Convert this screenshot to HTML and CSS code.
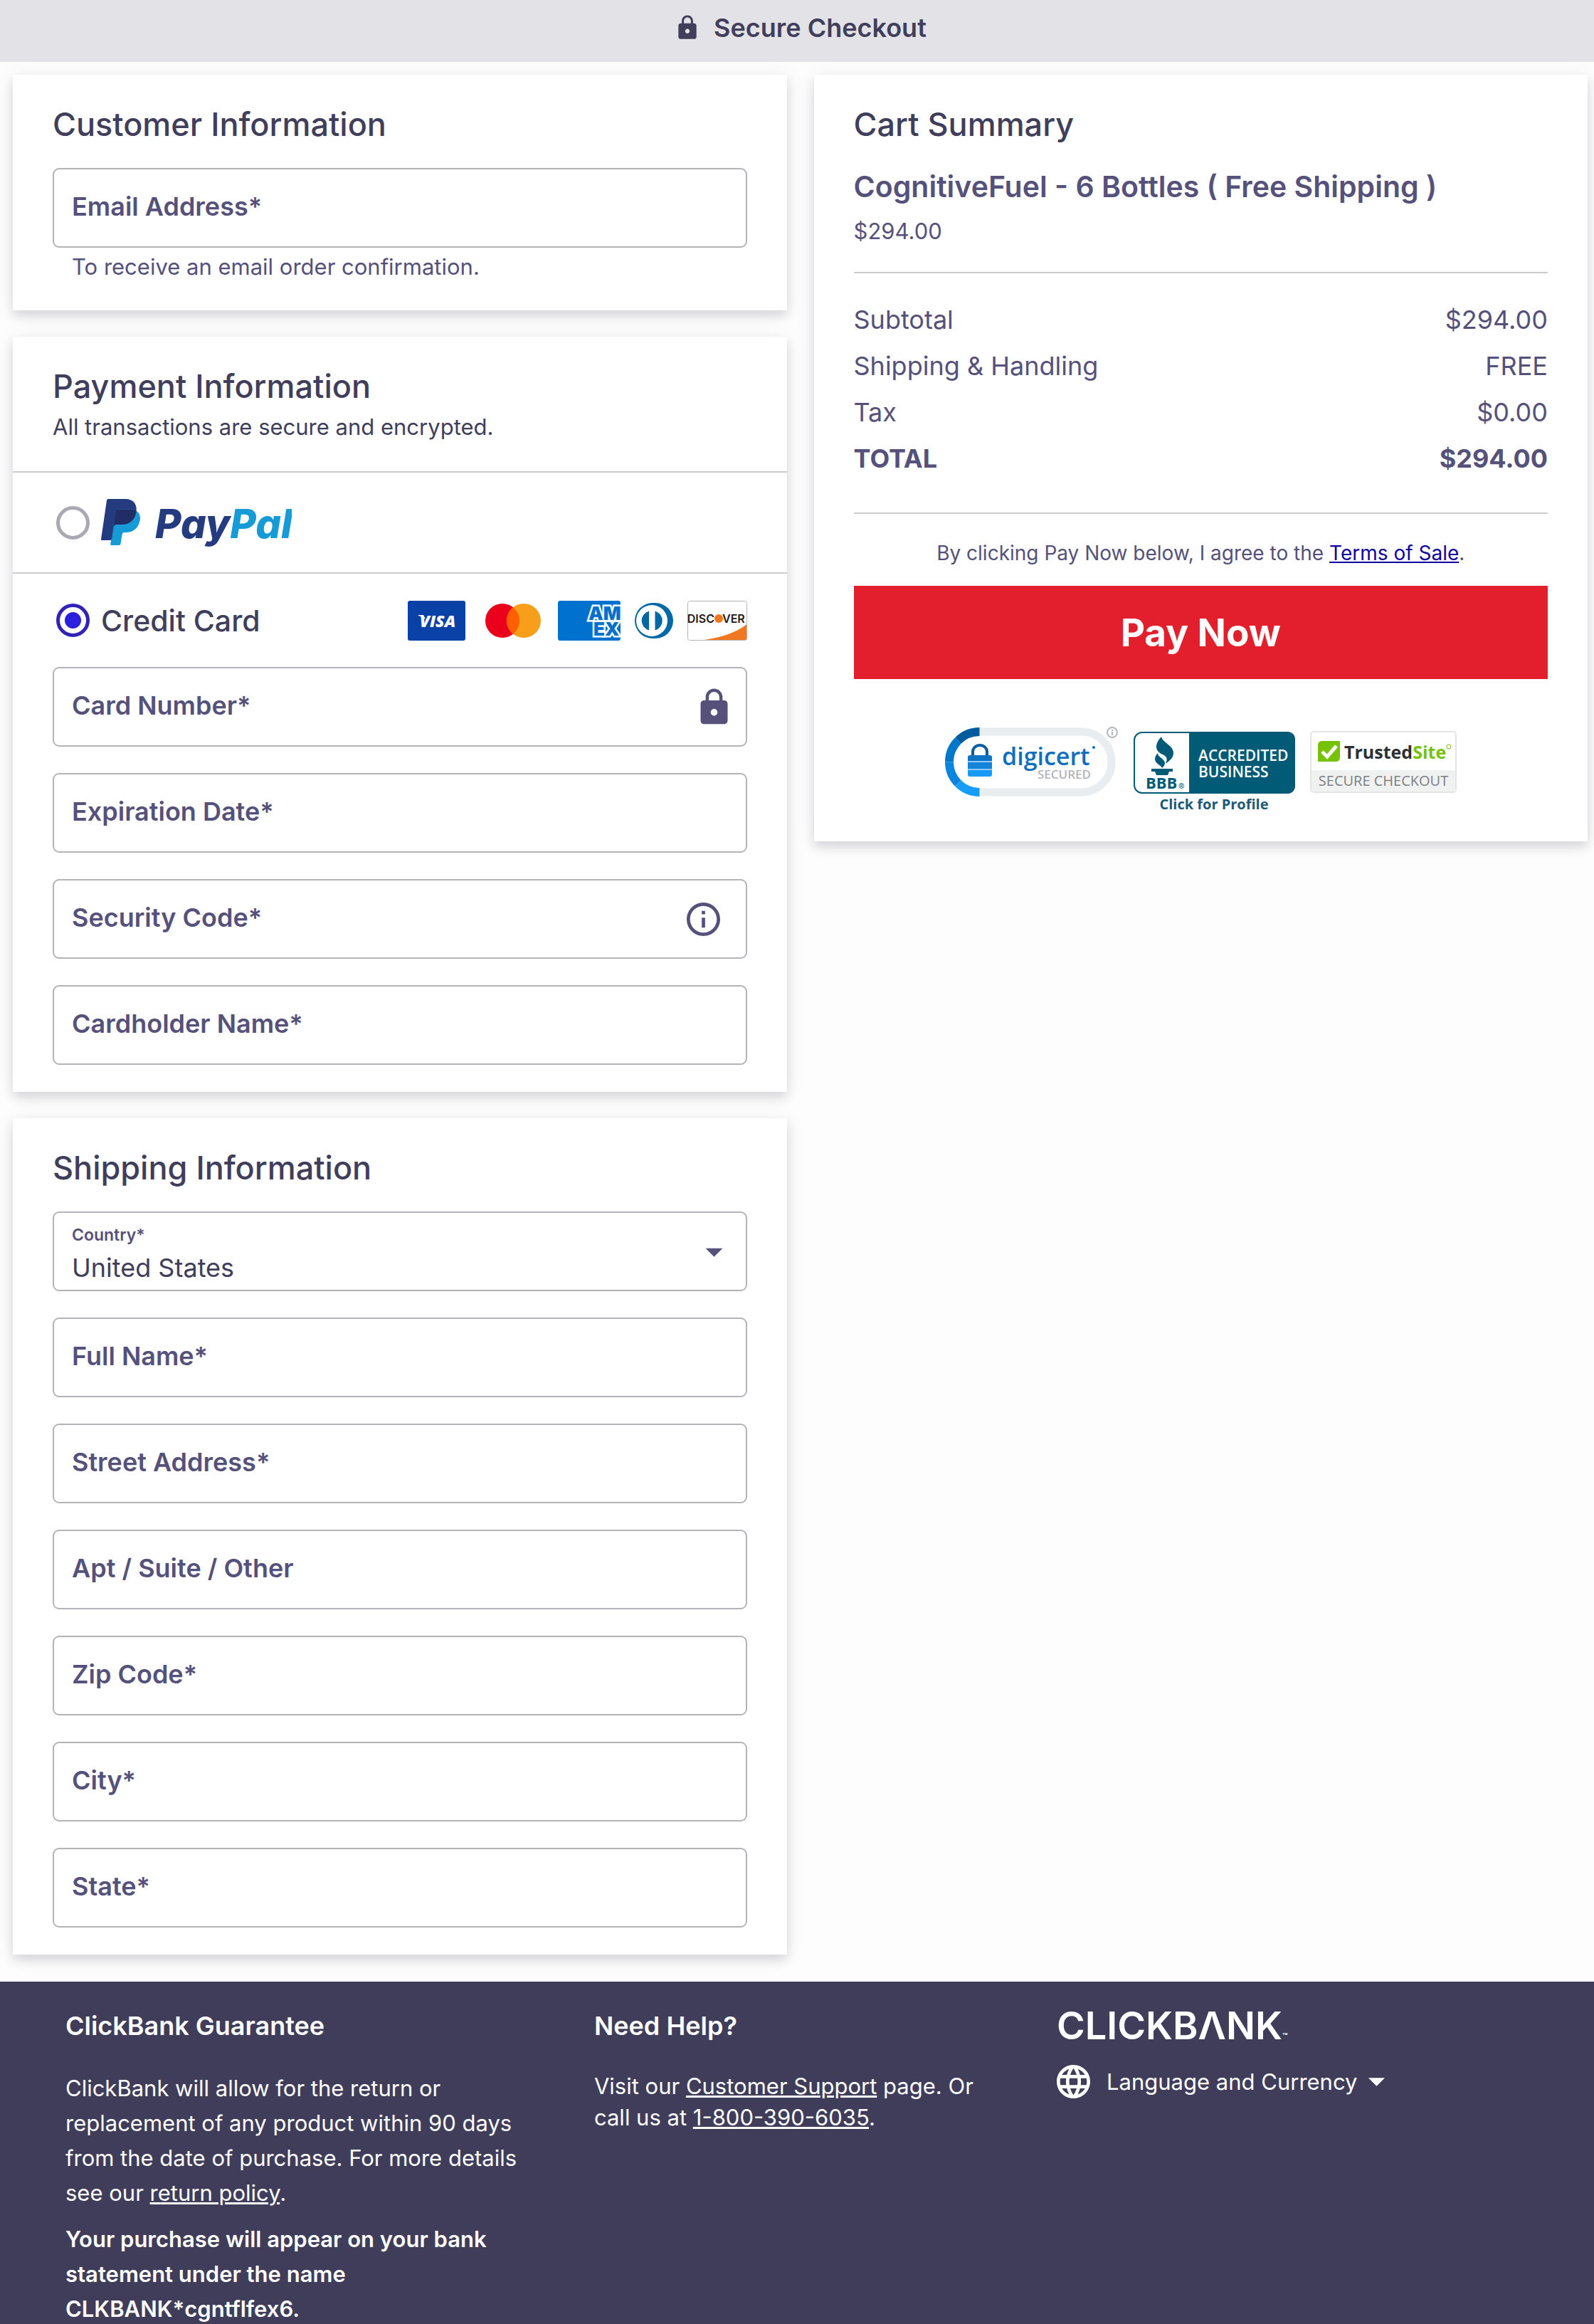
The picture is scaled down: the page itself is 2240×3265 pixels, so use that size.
FILE: index.html
```html
<!DOCTYPE html>
<html lang="en">
<head>
    <meta charset="UTF-8">
    <meta name="viewport" content="width=device-width, initial-scale=1.0">
    <title>Secure Checkout</title>
    <link rel="stylesheet" href="styles.css">
</head>
<body>
    <header class="topbar">
        <svg class="topbar-lock" viewBox="0 0 24 24" aria-hidden="true"><path d="M18 8h-1V6c0-2.760-2.240-5-5-5S7 3.240 7 6v2H6c-1.100 0-2 .9-2 2v10c0 1.100.9 2 2 2h12c1.100 0 2-.9 2-2V10c0-1.100-.9-2-2-2zm-6 9c-1.100 0-2-.9-2-2s.9-2 2-2 2 .9 2 2-.9 2-2 2zM8.900 8V6c0-1.710 1.390-3.100 3.100-3.100s3.100 1.390 3.100 3.100v2z"/></svg>
        <span>Secure Checkout</span>
    </header>

    <main class="checkout">
        <form class="column" id="order">
            <section class="card">
                <h2>Customer Information</h2>
                <div class="field">
                    <label for="email">Email Address*</label>
                    <input type="email" id="email">
                </div>
                <p class="hint">To receive an email order confirmation.</p>
            </section>

            <section class="card">
                <h2 class="tight">Payment Information</h2>
                <p class="sub">All transactions are secure and encrypted.</p>

                <div class="method">
                    <input type="radio" name="method" id="paypal">
                    <label for="paypal">
                        <svg width="268" height="76" viewBox="0 -5 268 76" role="img" aria-label="PayPal">
                            <clipPath id="pp"><path d="M10 0H34C46 0 51 8 49.500 18C47.500 30 40 36 29 36H23C19.500 36 18 37 17.500 40L15 56Q14.600 58 13 58H1Q0 58 0 56.500L8 2Q8.400 0 10 0Z"/></clipPath>
                            <path fill="#253b80" d="M10 0H34C46 0 51 8 49.500 18C47.500 30 40 36 29 36H23C19.500 36 18 37 17.500 40L15 56Q14.600 58 13 58H1Q0 58 0 56.500L8 2Q8.400 0 10 0Z"/>
                            <path fill="#179bd7" d="M22 14.500H40C52 14.500 56 22 54.800 29C53 41 45 47 35 47H33Q30 47 29.600 50L27.500 63Q27 65 25.500 65H14Q13 65 13.300 63L20.500 16Q21 14.500 22 14.500Z"/>
                            <path clip-path="url(#pp)" fill="#222d65" d="M22 14.500H40C52 14.500 56 22 54.800 29C53 41 45 47 35 47H33Q30 47 29.600 50L27.500 63Q27 65 25.500 65H14Q13 65 13.300 63L20.500 16Q21 14.500 22 14.500Z"/>
                            <text class="paypal-word" x="76" y="55" fill="#253b80">Pay<tspan fill="#179bd7">Pal</tspan></text>
                        </svg>
                    </label>
                </div>

                <div class="method method-card">
                    <input type="radio" name="method" id="credit" checked>
                    <label for="credit">Credit Card</label>
                    <div class="brands">
                        <svg width="81" height="56" viewBox="0 0 81 56" role="img" aria-label="Visa">
                            <rect width="81" height="56" rx="3" fill="#0a41a6"/>
                            <path fill="#fff" d="M14 20h8l3 6z"/>
                            <text class="visa" x="42" y="37" text-anchor="middle" fill="#fff">VISA</text>
                        </svg>
                        <svg width="90" height="56" viewBox="0 0 90 56" role="img" aria-label="Mastercard">
                            <clipPath id="mc"><circle cx="32" cy="28" r="24"/></clipPath>
                            <circle cx="32" cy="28" r="24" fill="#eb001b"/>
                            <circle cx="62" cy="28" r="24" fill="#f79e1b"/>
                            <circle cx="62" cy="28" r="24" fill="#ff5f00" clip-path="url(#mc)"/>
                        </svg>
                        <svg width="88" height="56" viewBox="0 0 88 56" role="img" aria-label="American Express">
                            <clipPath id="ax"><rect width="88" height="56" rx="3"/></clipPath>
                            <g clip-path="url(#ax)">
                                <rect width="88" height="56" fill="#0071ce"/>
                                <text class="amex" x="43" y="27">AM</text>
                                <text class="amex" x="50" y="49">EX</text>
                            </g>
                        </svg>
                        <svg width="54" height="56" viewBox="0 0 54 56" role="img" aria-label="Diners Club">
                            <rect y="3" width="54" height="50" rx="25" fill="#0069a5"/>
                            <circle cx="24" cy="28" r="22" fill="#fff"/>
                            <path fill="#0069a5" d="M20 14.500a14 14 0 0 0 0 27zM28.500 14.500a14 14 0 0 1 0 27z"/>
                        </svg>
                        <svg width="84" height="56" viewBox="0 0 84 56" role="img" aria-label="Discover">
                            <path fill="#f27721" d="M21 55.500Q62 50 83.500 33V53q0 2.500-2.500 2.500z"/>
                            <rect x=".5" y=".5" width="83" height="55" rx="3" fill="none" stroke="#b5b5b8"/>
                            <text class="discover" x="38" y="31" text-anchor="end">DISC</text>
                            <circle cx="44" cy="25" r="6" fill="#f27721"/>
                            <text class="discover" x="49" y="31">VER</text>
                        </svg>
                    </div>
                </div>

                <div class="fields">
                    <div class="field">
                        <label for="number">Card Number*</label>
                        <input type="text" id="number">
                        <svg class="field-icon" viewBox="0 0 24 24" aria-hidden="true"><path d="M18 8h-1V6c0-2.760-2.240-5-5-5S7 3.240 7 6v2H6c-1.100 0-2 .9-2 2v10c0 1.100.9 2 2 2h12c1.100 0 2-.9 2-2V10c0-1.100-.9-2-2-2zm-6 9c-1.100 0-2-.9-2-2s.9-2 2-2 2 .9 2 2-.9 2-2 2zM8.900 8V6c0-1.710 1.390-3.100 3.100-3.100s3.100 1.390 3.100 3.100v2z"/></svg>
                    </div>
                    <div class="field">
                        <label for="expiry">Expiration Date*</label>
                        <input type="text" id="expiry">
                    </div>
                    <div class="field">
                        <label for="cvv">Security Code*</label>
                        <input type="text" id="cvv">
                        <button type="button" class="info" aria-label="About the security code">
                            <svg viewBox="2 2 20 20" aria-hidden="true"><path d="M11 7h2v2h-2zm0 4h2v6h-2zm1-9C6.480 2 2 6.480 2 12s4.480 10 10 10 10-4.480 10-10S17.520 2 12 2zm0 18c-4.410 0-8-3.590-8-8s3.590-8 8-8 8 3.590 8 8-3.590 8-8 8z"/></svg>
                        </button>
                    </div>
                    <div class="field">
                        <label for="holder">Cardholder Name*</label>
                        <input type="text" id="holder">
                    </div>
                </div>
            </section>

            <section class="card">
                <h2>Shipping Information</h2>
                <div class="fields">
                    <div class="field field-select">
                        <label for="country">Country*</label>
                        <select id="country"><option>United States</option></select>
                        <svg class="field-icon" viewBox="0 0 24 24" aria-hidden="true"><path d="M7 10l5 5 5-5z"/></svg>
                    </div>
                    <div class="field">
                        <label for="name">Full Name*</label>
                        <input type="text" id="name">
                    </div>
                    <div class="field">
                        <label for="street">Street Address*</label>
                        <input type="text" id="street">
                    </div>
                    <div class="field">
                        <label for="apt">Apt / Suite / Other</label>
                        <input type="text" id="apt">
                    </div>
                    <div class="field">
                        <label for="zip">Zip Code*</label>
                        <input type="text" id="zip">
                    </div>
                    <div class="field">
                        <label for="city">City*</label>
                        <input type="text" id="city">
                    </div>
                    <div class="field">
                        <label for="state">State*</label>
                        <input type="text" id="state">
                    </div>
                </div>
            </section>
        </form>

        <div class="column">
            <section class="card">
                <h2>Cart Summary</h2>
                <h3>CognitiveFuel - 6 Bottles ( Free Shipping )</h3>
                <p class="price">$294.00</p>
                <div class="totals">
                    <table>
                        <tr><th>Subtotal</th><td>$294.00</td></tr>
                        <tr><th>Shipping &amp; Handling</th><td>FREE</td></tr>
                        <tr><th>Tax</th><td>$0.00</td></tr>
                        <tr class="total"><th>TOTAL</th><td>$294.00</td></tr>
                    </table>
                </div>
                <p class="terms">By clicking Pay Now below, I agree to the <a href="#">Terms of Sale</a>.</p>
                <button type="submit" form="order" class="pay">Pay Now</button>

                <div class="badges">
                    <svg width="244" height="124" viewBox="0 0 244 124" role="img" aria-label="DigiCert Secured">
                        <rect x="6" y="8" width="228" height="85" rx="42" fill="#fff" stroke="#e8edef" stroke-width="11"/>
                        <g fill="none" stroke-width="12">
                            <path stroke="#005b9f" d="M48.500 8A42.500 42.500 0 0 0 18.400 20.500"/>
                            <path stroke="#0078c9" d="M18.400 20.500A42.500 42.500 0 0 0 6 50.500"/>
                            <path stroke="#0b86e0" d="M6 50.500A42.500 42.500 0 0 0 18.400 80.500"/>
                            <path stroke="#169dfa" d="M18.400 80.500A42.500 42.500 0 0 0 48.500 93"/>
                        </g>
                        <path d="M39 43V36a10 9 0 0 1 20 0v7" fill="none" stroke="#0a5c9f" stroke-width="4"/>
                        <path fill="#0f73c4" d="M35 41h28q3 0 3 3v5H32v-5q0-3 3-3z"/>
                        <path fill="#8ccbfb" d="M32 49h34v2H32zM32 60h34v2H32z"/>
                        <path fill="#1583d8" d="M32 51h34v9H32z"/>
                        <path fill="#189bf6" d="M32 62h34v6q0 3-3 3H35q-3 0-3-3z"/>
                        <text class="digicert" x="80" y="55">digicert</text>
                        <circle cx="209" cy="30" r="2" fill="#0f6fbe"/>
                        <text class="secured" x="205" y="74" text-anchor="end">SECURED</text>
                        <circle cx="235" cy="9" r="7" fill="#fff" stroke="#b5b7bf" stroke-width="2"/>
                        <path stroke="#b5b7bf" stroke-width="2" d="M235 5v2M235 8v5"/>
                    </svg>
                    <svg width="227" height="124" viewBox="0 0 227 124" role="img" aria-label="BBB Accredited Business">
                        <rect x="1" y="9" width="225" height="85" rx="11" fill="#fff" stroke="#015a76" stroke-width="2"/>
                        <path fill="#015a76" d="M78 8h137q12 0 12 12v63q0 12-12 12H78z"/>
                        <path fill="#015a76" d="M39 15C41 24 56 27 56 38C56 45 50 49 45 53C48 46 47 43 41 40C31 36 28 27 39 15Z"/>
                        <path fill="#015a76" d="M34 38C33 43 44 46 44 52C44 55 42 57 40 59C39 55 30 53 30 46C30 43 32 40 34 38Z"/>
                        <path fill="#015a76" d="M25 60h30v4h-5l-2 5H32l-2-5h-5z"/>
                        <text class="bbb" x="17" y="88">BBB</text>
                        <text class="reg" x="63" y="88">®</text>
                        <text class="accredited" x="91" y="49">ACCREDITED</text>
                        <text class="accredited" x="91" y="72">BUSINESS</text>
                        <text class="profile" x="113" y="117" text-anchor="middle">Click for Profile</text>
                    </svg>
                    <svg width="206" height="124" viewBox="0 0 206 124" role="img" aria-label="TrustedSite Secure Checkout">
                        <rect x="1" y="8" width="204" height="85" rx="4" fill="#fff" stroke="#e4e6e6" stroke-width="2"/>
                        <path fill="#f0f2f2" d="M2 62h202v27q0 3-3 3H5q-3 0-3-3z"/>
                        <path fill="#76c207" d="M17 21h25v23q0 6-6 6H11V27q0-6 6-6z"/>
                        <path fill="none" stroke="#fff" stroke-width="5" d="M17 36l7 7 13-15"/>
                        <text class="trusted" x="48" y="46" fill="#2d3033">Trusted<tspan fill="#76c207">Site</tspan></text>
                        <circle cx="195" cy="29" r="3" fill="none" stroke="#76c207"/>
                        <text class="secure" x="103" y="84" text-anchor="middle">SECURE CHECKOUT</text>
                    </svg>
                </div>
            </section>
        </div>
    </main>

    <footer class="footer">
        <div class="footer-col">
            <h4>ClickBank Guarantee</h4>
            <p class="loose">ClickBank will allow for the return or replacement of any product within 90 days from the date of purchase. For more details see our <a href="#">return policy</a>.</p>
            <p class="loose statement">Your purchase will appear on your bank statement under the name CLKBANK*cgntflfex6.</p>
        </div>
        <div class="footer-col">
            <h4>Need Help?</h4>
            <p>Visit our <a href="#">Customer Support</a> page. Or call us at <a href="#">1-800-390-6035</a>.</p>
        </div>
        <div class="footer-col">
            <svg class="logo" width="360" height="48" viewBox="0 0 360 48" role="img" aria-label="ClickBank">
                <text class="logo-word" x="0" y="43">CLICKBΛNK<tspan class="logo-tm">™</tspan></text>
            </svg>
            <button type="button" class="language">
                <svg width="47" height="47" viewBox="2 2 20 20" aria-hidden="true"><path d="M11.990 2C6.470 2 2 6.480 2 12s4.470 10 9.990 10C17.520 22 22 17.520 22 12S17.520 2 11.990 2zm6.930 6h-2.950c-.32-1.250-.78-2.450-1.380-3.560 1.840.63 3.370 1.910 4.330 3.560zM12 4.040c.83 1.200 1.480 2.530 1.910 3.960h-3.820c.43-1.430 1.080-2.760 1.910-3.960zM4.260 14C4.100 13.360 4 12.690 4 12s.1-1.360.26-2h3.380c-.08.66-.14 1.320-.14 2s.06 1.340.14 2H4.260zm.82 2h2.950c.32 1.250.78 2.450 1.380 3.560-1.840-.63-3.370-1.900-4.330-3.560zm2.950-8H5.080c.96-1.660 2.490-2.930 4.330-3.560C8.810 5.550 8.350 6.750 8.030 8zM12 19.960c-.83-1.200-1.480-2.530-1.910-3.960h3.820c-.43 1.430-1.080 2.760-1.910 3.960zM14.340 14H9.660c-.09-.66-.16-1.320-.16-2s.07-1.350.16-2h4.680c.09.65.16 1.320.16 2s-.07 1.340-.16 2zm.25 5.560c.6-1.110 1.060-2.310 1.380-3.560h2.950c-.96 1.650-2.490 2.930-4.330 3.560zM16.360 14c.08-.66.14-1.320.14-2s-.06-1.340-.14-2h3.380c.16.640.26 1.310.26 2s-.1 1.360-.26 2h-3.380z"/></svg>
                <span>Language and Currency</span>
                <svg class="caret" width="23" height="12" viewBox="7 10 10 5" aria-hidden="true"><path d="M7 10l5 5 5-5z"/></svg>
            </button>
        </div>
    </footer>
</body>
</html>
```
FILE: styles.css
```css
* {
    margin: 0;
    padding: 0;
    box-sizing: border-box;
}
body {
    font-family: Inter, "Liberation Sans", sans-serif;
    font-size: 31px;
    color: #55517a;
    background-color: #fdfdfd;
}
svg {
    display: block;
    flex-shrink: 0;
}
button, input, select {
    font: inherit;
    color: inherit;
    border: none;
    background: none;
}

/* Top bar */
.topbar {
    display: flex;
    justify-content: center;
    align-items: center;
    gap: 18px;
    height: 87px;
    padding: 0 9px 9px 18px;
    font-size: 36px;
    font-weight: 600;
    color: #403e5b;
    background-color: #e3e2e7;
}
.topbar-lock {
    width: 38px;
    height: 38px;
    fill: #403e5b;
}

/* Cards */
.checkout {
    display: grid;
    grid-template-columns: 1fr 1fr;
    align-items: start;
    gap: 38px;
    padding: 18px 9px 38px 18px;
}
.column {
    display: grid;
    gap: 37px;
}
.card {
    padding: 38px 56px;
    background-color: #fff;
    box-shadow: 0 8px 14px rgba(30, 30, 50, .14), 0 2px 30px rgba(30, 30, 50, .06);
}
h2 {
    margin-bottom: 29px;
    font-size: 45px;
    line-height: 64px;
    font-weight: 500;
    color: #403e5b;
}
h2.tight {
    margin-bottom: 0;
}
.sub {
    padding-bottom: 37px;
    line-height: 50px;
    color: #403e5b;
}
.hint {
    padding: 4px 27px 0;
    line-height: 46px;
}

/* Form fields */
.fields {
    display: grid;
    gap: 37px;
}
.field {
    display: grid;
    align-items: center;
    height: 112px;
    border: 2px solid #b4b3b8;
    border-radius: 9px;
}
.field > * {
    grid-area: 1 / 1;
}
.field label {
    padding: 0 25px 4px;
    font-size: 36px;
    font-weight: 600;
}
.field input, .field select {
    width: 100%;
    height: 100%;
    padding: 0 25px;
    font-size: 36px;
}
.field-icon {
    justify-self: end;
    width: 57px;
    height: 57px;
    margin-right: 16px;
    fill: #55517a;
    pointer-events: none;
}
.info {
    justify-self: end;
    width: 47px;
    margin-right: 36px;
    fill: #55517a;
}
.field-select label {
    align-self: start;
    padding-top: 16px;
    font-size: 23px;
    line-height: 30px;
}
.field-select select {
    padding-top: 46px;
    color: #403e5b;
    appearance: none;
}

/* Payment methods */
.method {
    display: flex;
    align-items: center;
    height: 142px;
    margin: 0 -56px;
    padding: 0 56px;
    border-top: 2px solid #cbcbcd;
}
.method-card {
    height: 133px;
}
.method label {
    padding-left: 16px;
    font-size: 41px;
    font-weight: 500;
    color: #403e5b;
}
.method input {
    width: 47px;
    height: 47px;
    margin-left: 5px;
    border: 5px solid #a9a8b3;
    border-radius: 50%;
    appearance: none;
}
.method input:checked {
    border-color: #3322b8;
    background: radial-gradient(circle, #2d1fde 11px, #fff 12px);
}
.brands {
    display: flex;
    gap: 20px;
    margin-left: auto;
}
.paypal-word {
    font: italic 800 56px Inter, sans-serif;
}
.visa {
    font: italic 800 23px "Open Sans", sans-serif;
}
.amex {
    font: 900 26px Inter, sans-serif;
    fill: #0071ce;
    stroke: #fff;
    stroke-width: 5px;
    paint-order: stroke;
}
.discover {
    font: 600 16px Inter, sans-serif;
    fill: #1d1b1c;
}

/* Cart summary */
h3 {
    font-size: 41px;
    line-height: 52px;
    font-weight: 600;
}
.price {
    margin-top: 12px;
    padding-bottom: 32px;
    line-height: 50px;
}
.totals {
    padding: 32px 0 44px;
    border: solid #cbcbcd;
    border-width: 2px 0;
}
.totals table {
    width: 100%;
    border-collapse: collapse;
    font-size: 36px;
}
.totals tr {
    height: 65px;
}
.totals th {
    text-align: left;
    font-weight: 400;
}
.totals td {
    text-align: right;
}
.totals .total th, .totals .total td {
    font-weight: 700;
}
.terms {
    margin: 32px 0 23px;
    font-size: 28px;
    line-height: 46px;
    text-align: center;
}
.terms a {
    color: #1100a0;
}
.pay {
    width: 100%;
    height: 131px;
    font-size: 53px;
    font-weight: 700;
    color: #fff;
    background-color: #e41f2d;
    cursor: pointer;
}
.badges {
    display: flex;
    justify-content: center;
    gap: 21px;
    margin-top: 66px;
}
.digicert {
    font: 600 34px "Open Sans", sans-serif;
    fill: #0f6fbe;
}
.secured {
    font: 600 17px "Open Sans", sans-serif;
    fill: #b3b5bb;
}
.bbb {
    font: 700 22px "Open Sans", sans-serif;
    fill: #015a76;
}
.reg {
    font: 700 10px "Open Sans", sans-serif;
    fill: #015a76;
}
.accredited {
    font: 600 21px "Open Sans", sans-serif;
    fill: #fff;
}
.profile {
    font: 700 20px "Open Sans", sans-serif;
    fill: #1c5a78;
}
.trusted {
    font: 700 25px "Open Sans", sans-serif;
}
.secure {
    font: 400 20px "Open Sans", sans-serif;
    fill: #7d8082;
}

/* Footer */
.footer {
    display: grid;
    grid-template-columns: 8fr 7fr 8fr;
    padding: 38px 12px 0 92px;
    color: #fff;
    background-color: #3f3d59;
}
.footer-col {
    padding-right: 90px;
    line-height: 44px;
}
.footer h4 {
    margin-bottom: 39px;
    font-size: 36px;
    line-height: 48px;
    font-weight: 600;
}
.footer a {
    color: #fff;
}
.loose {
    line-height: 49px;
}
.statement {
    margin-top: 16px;
    font-weight: 600;
}
.logo {
    margin-bottom: 31px;
}
.logo-word {
    font: 600 54px Inter, sans-serif;
    fill: #fff;
}
.logo-tm {
    font-size: 12px;
}
.language {
    display: flex;
    align-items: center;
    gap: 23px;
    cursor: pointer;
}
.language svg {
    fill: #fff;
}
.language .caret {
    margin-left: -7px;
}

@media (max-width: 1100px) {
    .checkout, .footer {
        grid-template-columns: 1fr;
    }
}
```
